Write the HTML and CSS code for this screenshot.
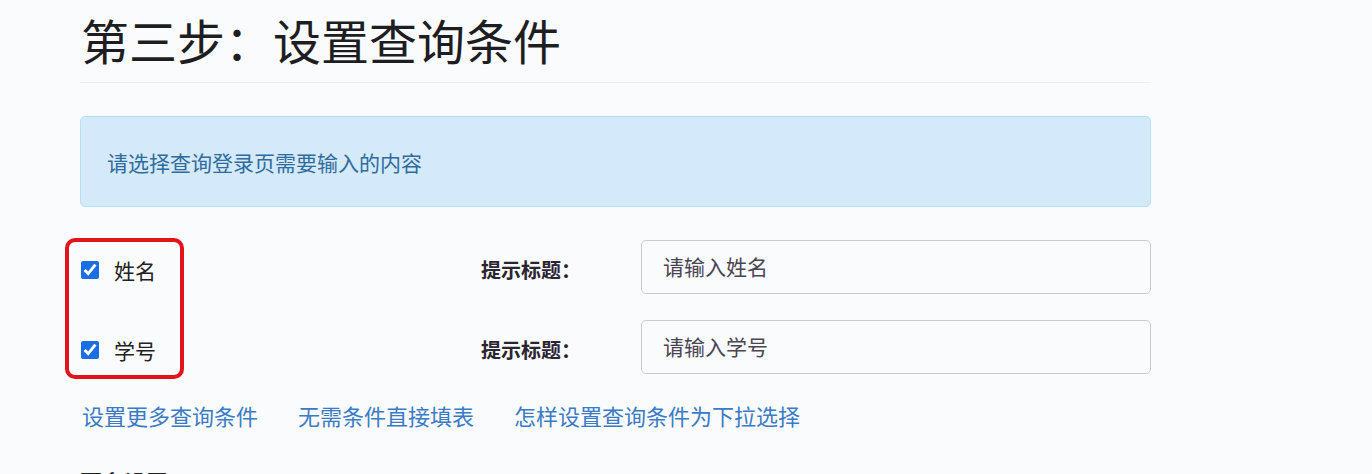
FILE: index.html
```html
<!DOCTYPE html>
<html lang="zh-CN">
<head>
<meta charset="utf-8">
<title>第三步：设置查询条件</title>
<link rel="stylesheet" href="styles.css">
</head>
<body>
<div class="page">
  <h1 class="title">第三步：设置查询条件</h1>
  <div class="alert">请选择查询登录页需要输入的内容</div>
  <div class="fields">
    <div class="highlight"></div>
    <div class="row">
      <label class="check"><input type="checkbox" checked><span>姓名</span></label>
      <span class="hint">提示标题：</span>
      <input class="text" type="text" placeholder="请输入姓名">
    </div>
    <div class="row">
      <label class="check"><input type="checkbox" checked><span>学号</span></label>
      <span class="hint">提示标题：</span>
      <input class="text" type="text" placeholder="请输入学号">
    </div>
  </div>
  <div class="links">
    <a href="#">设置更多查询条件</a>
    <a href="#">无需条件直接填表</a>
    <a href="#">怎样设置查询条件为下拉选择</a>
  </div>
  <div class="section">更多设置</div>
</div>
</body>
</html>
```
FILE: styles.css
```css
html, body {
  margin: 0;
  padding: 0;
  background: #fafbfd;
  font-family: "Noto Sans CJK SC", "Noto Sans", sans-serif;
  color: #222;
}
.page {
  width: 1071px;
  padding: 13px 0 0 80px;
}
.title {
  margin: 0;
  font-size: 48px;
  line-height: 52px;
  font-weight: 400;
  color: #1e1e22;
  padding: 0 0 17px 1px;
  border-bottom: 1px solid #eceef1;
}
.alert {
  margin-top: 33px;
  height: 89px;
  box-sizing: content-box;
  display: flex;
  align-items: center;
  padding: 0 0 0 26px;
  background: #d4e9f9;
  border: 1px solid #b9dff3;
  border-radius: 5px;
  font-size: 21px;
  color: #2f6c9d;
}
.fields {
  position: relative;
  margin-top: 33px;
  display: flex;
  flex-direction: column;
  gap: 26px;
}
.highlight {
  position: absolute;
  left: -15px;
  top: -2px;
  width: 111px;
  height: 133px;
  border: 4px solid #e3131b;
  border-radius: 10px;
}
.row {
  display: flex;
  align-items: center;
  height: 54px;
}
.check {
  display: flex;
  align-items: center;
  width: 401px;
  padding-top: 5px;
  font-size: 21px;
  color: #222;
}
.check input {
  width: 18px;
  height: 18px;
  margin: 0 15px 0 1px;
  accent-color: #1a6de3;
}
.hint {
  width: 160px;
  font-size: 20px;
  font-weight: 700;
  color: #2a2530;
  padding-top: 5px;
}
.text {
  width: 510px;
  height: 54px;
  box-sizing: border-box;
  border: 1px solid #c9cbcf;
  border-radius: 5px;
  background: #fafbfd;
  padding: 0 0 3px 21px;
  font-family: "Noto Sans CJK SC", sans-serif;
  font-size: 21px;
  color: #333;
  outline: none;
}
.text::placeholder {
  color: #4a4552;
}
.links {
  display: flex;
  gap: 40px;
  margin-top: 26px;
  padding-left: 2px;
}
.links a {
  font-size: 22px;
  line-height: 30px;
  color: #3b7ac6;
  text-decoration: none;
}
.section {
  margin-top: 35px;
  font-size: 22px;
  font-weight: 700;
  color: #222;
}
```
